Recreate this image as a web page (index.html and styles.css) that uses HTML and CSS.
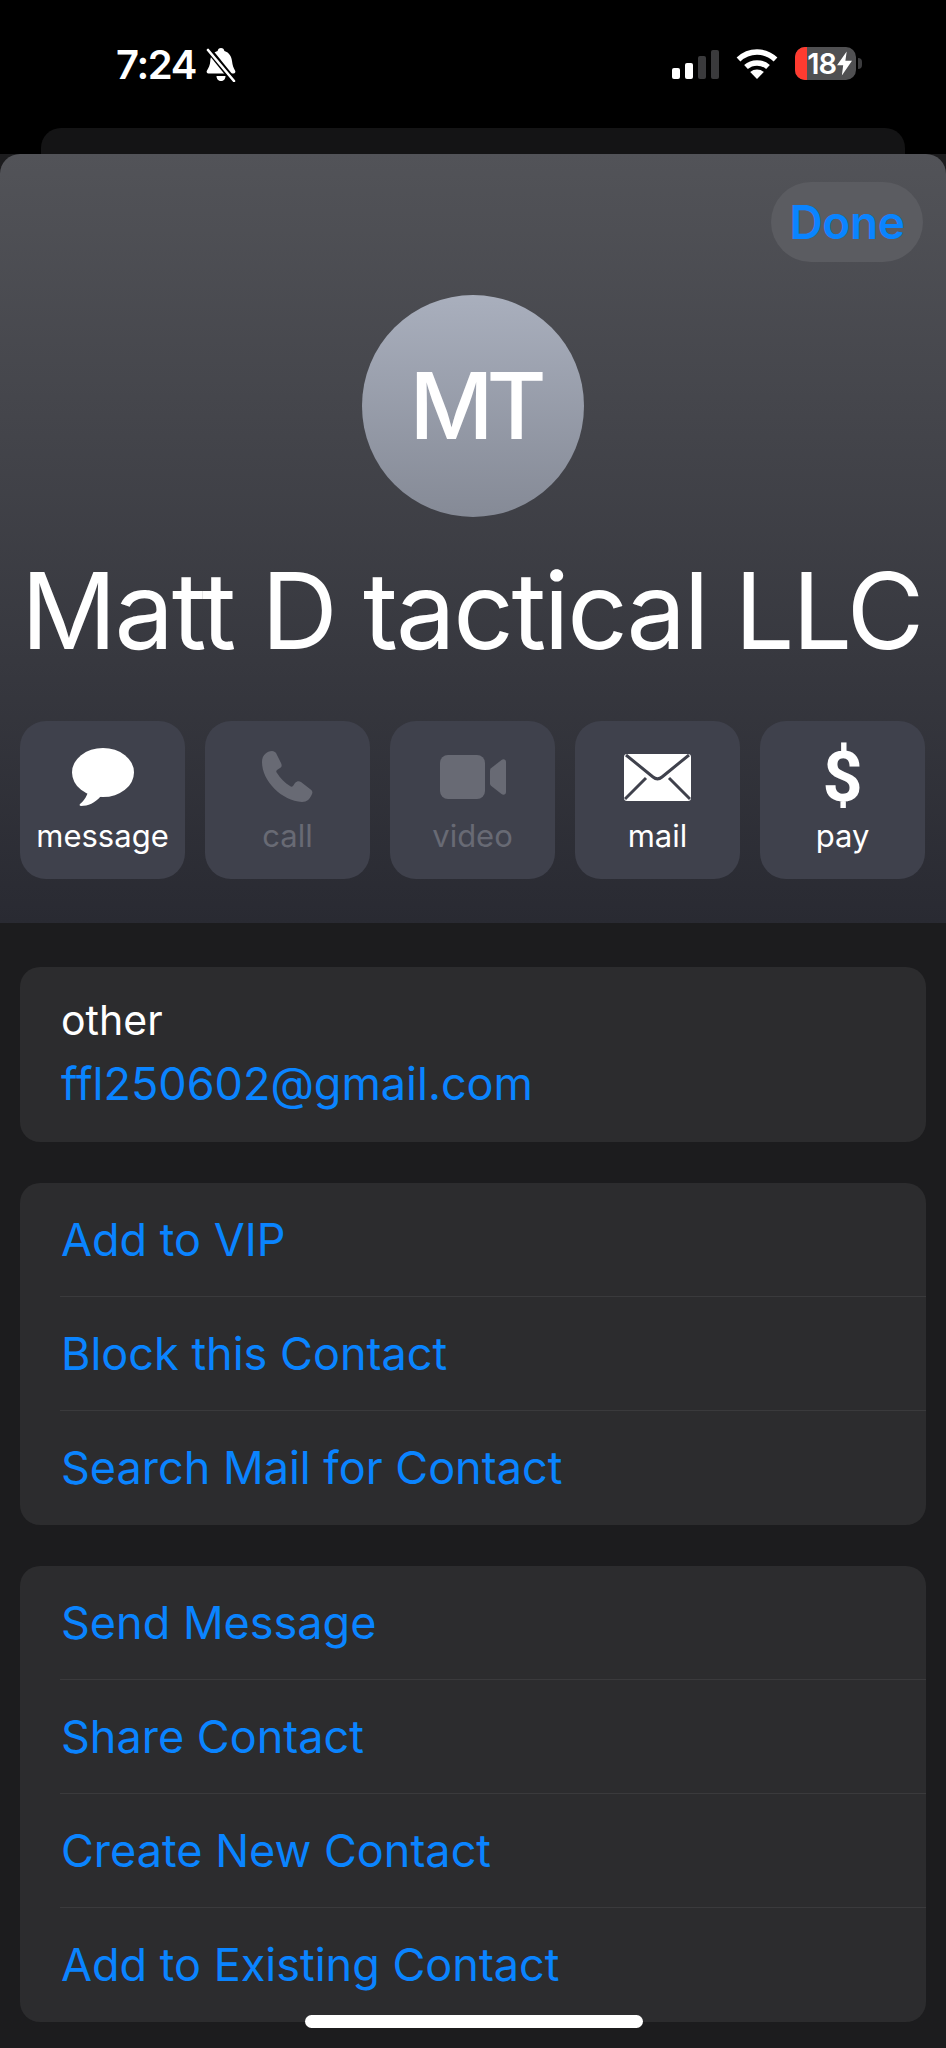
FILE: index.html
```html
<!DOCTYPE html>
<html>
<head>
	<meta charset="utf-8">
	<meta name="viewport" content="width=device-width, initial-scale=1">
	<title>Matt D tactical LLC</title>
	<link rel="stylesheet" href="styles.css">
</head>
<body>
	<div class="statusbar">
		<div class="status-left">
			<span class="time">7:24</span>
			<svg class="bell" width="30" height="34" viewBox="0 0 30 34">
				<path fill="#fff" d="M15 0c2 0 3 1 3.400 3 5 1.500 7 5.500 7.600 10 .5 4.500 1.500 7 3 9.500 1 1.500 0 3-1.500 3h-25c-1.500 0-2.500-1.500-1.500-3 1.500-2.500 3-5 3.300-9.500C4.500 8.500 6.500 4.500 11.600 3 12 1 13 0 15 0z"/>
				<path fill="#fff" d="M10.500 28h9c0 3-2 5-4.500 5s-4.500-2-4.500-5z"/>
				<path stroke="#000" stroke-width="6" d="M2 1l26 32"/>
				<path stroke="#fff" stroke-width="2.600" stroke-linecap="round" d="M2 2l26 31"/>
			</svg>
		</div>
		<div class="status-right">
			<div class="signal">
				<i class="bar bar1"></i><i class="bar bar2"></i><i class="bar bar3 dim"></i><i class="bar bar4 dim"></i>
			</div>
			<svg class="wifi" width="42" height="31" viewBox="0 0 42 31">
				<path fill="none" stroke="#fff" stroke-width="5.500" d="M2.500 11.500c10.500-10 26.500-10 37 0"/>
				<path fill="none" stroke="#fff" stroke-width="5.500" d="M10 19c6-5.500 16-5.500 22 0"/>
				<path fill="#fff" d="M21 31l-6.800-7c4-3.300 9.600-3.300 13.600 0z"/>
			</svg>
			<div class="battery">
				<div class="battery-body">
					<i class="battery-red"></i>
					<span class="battery-num">18</span>
					<svg class="bolt" width="15" height="25" viewBox="0 0 17 27"><path fill="#fff" d="M11 0L0 15.500h7L5.500 27 17 10.500h-7.500z"/></svg>
				</div>
				<i class="battery-nub"></i>
			</div>
		</div>
	</div>

	<div class="backsheet"></div>

	<div class="hero">
		<div class="hero-top">
			<div class="done">Done</div>
		</div>
		<div class="avatar">MT</div>
		<div class="name">Matt D tactical LLC</div>
		<div class="actions">
			<div class="action">
				<div class="action-icon">
					<svg width="62" height="58" viewBox="0 0 62 58">
						<ellipse fill="#fff" cx="31" cy="24.500" rx="31" ry="24.500"/>
						<path fill="#fff" d="M16 42c0 5-4 11-8 14-1 1 0 2 1 2 7 0 14-3 20-10z"/>
					</svg>
				</div>
				<div class="action-label">message</div>
			</div>
			<div class="action off">
				<div class="action-icon">
					<svg width="51" height="52" viewBox="0 0 51 52">
						<path fill="#686a74" d="M0 11C0 4 5 0 10 0c2 0 3 1 4 2l5 10c1 2 1 4-1 5l-3 2c-1 1-1 2 0 3 3 5 8 10 13 13 1 1 2 1 3 0l2-3c2-2 4-2 6-1l9 7c2 1 3 3 2 5-2 5-5 8-10 8C20 50 0 30 0 11z"/>
					</svg>
				</div>
				<div class="action-label">call</div>
			</div>
			<div class="action off">
				<div class="action-icon">
					<svg width="66" height="44" viewBox="0 0 66 44">
						<rect fill="#686a74" width="45" height="44" rx="8"/>
						<path fill="#686a74" d="M50 15.500c0-1 .4-1.800 1-2.300L61.500 5c2-1.500 4.500-.5 4.500 2v30c0 2.500-2.500 3.500-4.500 2L51 30.800c-.6-.5-1-1.300-1-2.300z"/>
					</svg>
				</div>
				<div class="action-label">video</div>
			</div>
			<div class="action">
				<div class="action-icon">
					<svg width="67" height="47" viewBox="0 0 67 47">
						<rect fill="#fff" width="67" height="47" rx="3"/>
						<path fill="none" stroke="#3f414c" stroke-width="3" d="M2 1l27 22c3 2.500 6 2.500 9 0L65 1"/>
						<path fill="none" stroke="#3f414c" stroke-width="3" d="M1 45l21-21M66 45L45 24"/>
					</svg>
				</div>
				<div class="action-label">mail</div>
			</div>
			<div class="action">
				<div class="action-icon"><span class="dollar">$</span></div>
				<div class="action-label">pay</div>
			</div>
		</div>
	</div>

	<div class="lists">
		<div class="card email-card">
			<div class="email-label">other</div>
			<div class="email-value">ffl250602@gmail.com</div>
		</div>
		<div class="card">
			<div class="row">Add to VIP</div>
			<div class="row">Block this Contact</div>
			<div class="row">Search Mail for Contact</div>
		</div>
		<div class="card">
			<div class="row">Send Message</div>
			<div class="row">Share Contact</div>
			<div class="row">Create New Contact</div>
			<div class="row">Add to Existing Contact</div>
		</div>
	</div>

	<div class="home-bar"></div>
</body>
</html>
```

FILE: styles.css
```css
html,body{
	margin:0;
	padding:0;
}
body{
	position:relative;
	width:946px;
	height:2048px;
	overflow:hidden;
	background:#1c1c1e;
	font-family:"Inter","Liberation Sans",sans-serif;
	color:#fff;
}
.statusbar{
	background:#000;
	height:154px;
	box-sizing:border-box;
	padding:46px 84px 0 116px;
	display:flex;
	justify-content:space-between;
	align-items:flex-start;
}
.status-left{
	display:flex;
	align-items:center;
	gap:10px;
}
.time{
	font-size:40px;
	line-height:38px;
	font-weight:600;
	letter-spacing:-1.300px;
}
.status-right{
	display:flex;
	align-items:center;
	gap:17px;
	padding-top:1px;
}
.signal{
	display:flex;
	align-items:flex-end;
	gap:5px;
	height:30px;
}
.bar{
	display:block;
	width:8px;
	background:#fff;
	border-radius:2px;
}
.bar1{height:11px;}
.bar2{height:16px;}
.bar3{height:23px;}
.bar4{height:29px;}
.dim{background:#3a3a3c;}
.battery{
	display:flex;
	align-items:center;
	gap:2px;
}
.battery-body{
	position:relative;
	width:61px;
	height:33px;
	border-radius:10px;
	background:#505052;
	overflow:hidden;
	display:flex;
	align-items:center;
	justify-content:flex-end;
	gap:1px;
	padding-right:4px;
	box-sizing:border-box;
}
.battery-red{
	position:absolute;
	left:0;
	top:0;
	bottom:0;
	width:12px;
	background:#ff3b30;
}
.battery-num{
	position:relative;
	font-size:29px;
	line-height:33px;
	font-weight:600;
	letter-spacing:-1px;
}
.bolt{position:relative;}
.battery-nub{
	display:block;
	width:4px;
	height:11px;
	background:#3c3c3e;
	border-radius:0 4px 4px 0;
}
.backsheet{
	position:absolute;
	top:128px;
	left:41px;
	width:864px;
	height:40px;
	background:#141415;
	border-radius:20px 20px 0 0;
}
.hero{
	position:absolute;
	top:154px;
	left:0;
	right:0;
	height:769px;
	box-sizing:border-box;
	padding:28px 20px 0;
	border-radius:20px 20px 0 0;
	background:linear-gradient(#525358,#292a32);
}
.hero-top{
	display:flex;
	justify-content:flex-end;
	padding-right:3px;
}
.done{
	width:152px;
	height:80px;
	border-radius:40px;
	background:#5b5c61;
	color:#0a84ff;
	font-size:46px;
	font-weight:600;
	line-height:80px;
	text-align:center;
	letter-spacing:-0.400px;
}
.avatar{
	width:222px;
	height:222px;
	margin:33px auto 0;
	border-radius:50%;
	background:linear-gradient(#a9afbd,#858a96);
	font-size:92px;
	font-weight:500;
	line-height:222px;
	text-align:center;
	letter-spacing:-7px;
	text-indent:3px;
}
.name{
	margin:30px -20px 0 -23px;
	font-size:106px;
	line-height:128px;
	text-align:center;
	white-space:nowrap;
	letter-spacing:-2.300px;
}
.actions{
	display:flex;
	gap:20px;
	margin-top:46px;
}
.action{
	width:165px;
	height:158px;
	border-radius:26px;
	background:#3f414c;
	display:flex;
	flex-direction:column;
	align-items:center;
}
.action-icon{
	height:66px;
	margin-top:23px;
	display:flex;
	align-items:center;
	justify-content:center;
}
.dollar{
	font-family:"Roboto","Liberation Sans",sans-serif;
	font-size:70px;
	font-weight:700;
	line-height:66px;
}
.action-label{
	font-size:31px;
	line-height:40px;
	margin-top:6px;
}
.off .action-label{color:#686a74;}
.lists{
	position:absolute;
	top:923px;
	left:0;
	right:0;
	padding:44px 20px 0;
	display:flex;
	flex-direction:column;
	gap:41px;
}
.card{
	background:#2c2c2e;
	border-radius:20px;
	overflow:hidden;
}
.email-card{
	height:175px;
	box-sizing:border-box;
	padding:27px 41px 0;
	font-size:41px;
}
.email-label{
	line-height:52px;
}
.email-value{
	color:#0a84ff;
	line-height:62px;
	margin-top:7px;
	font-size:45px;
}
.row{
	box-sizing:border-box;
	margin-left:40px;
	padding-left:1px;
	height:114px;
	line-height:114px;
	font-size:45px;
	color:#0a84ff;
	border-bottom:1.500px solid #3a3a3c;
}
.row:last-child{border-bottom:none;}
.home-bar{
	position:absolute;
	left:305px;
	top:2015px;
	width:338px;
	height:13px;
	border-radius:7px;
	background:#fff;
}
```
